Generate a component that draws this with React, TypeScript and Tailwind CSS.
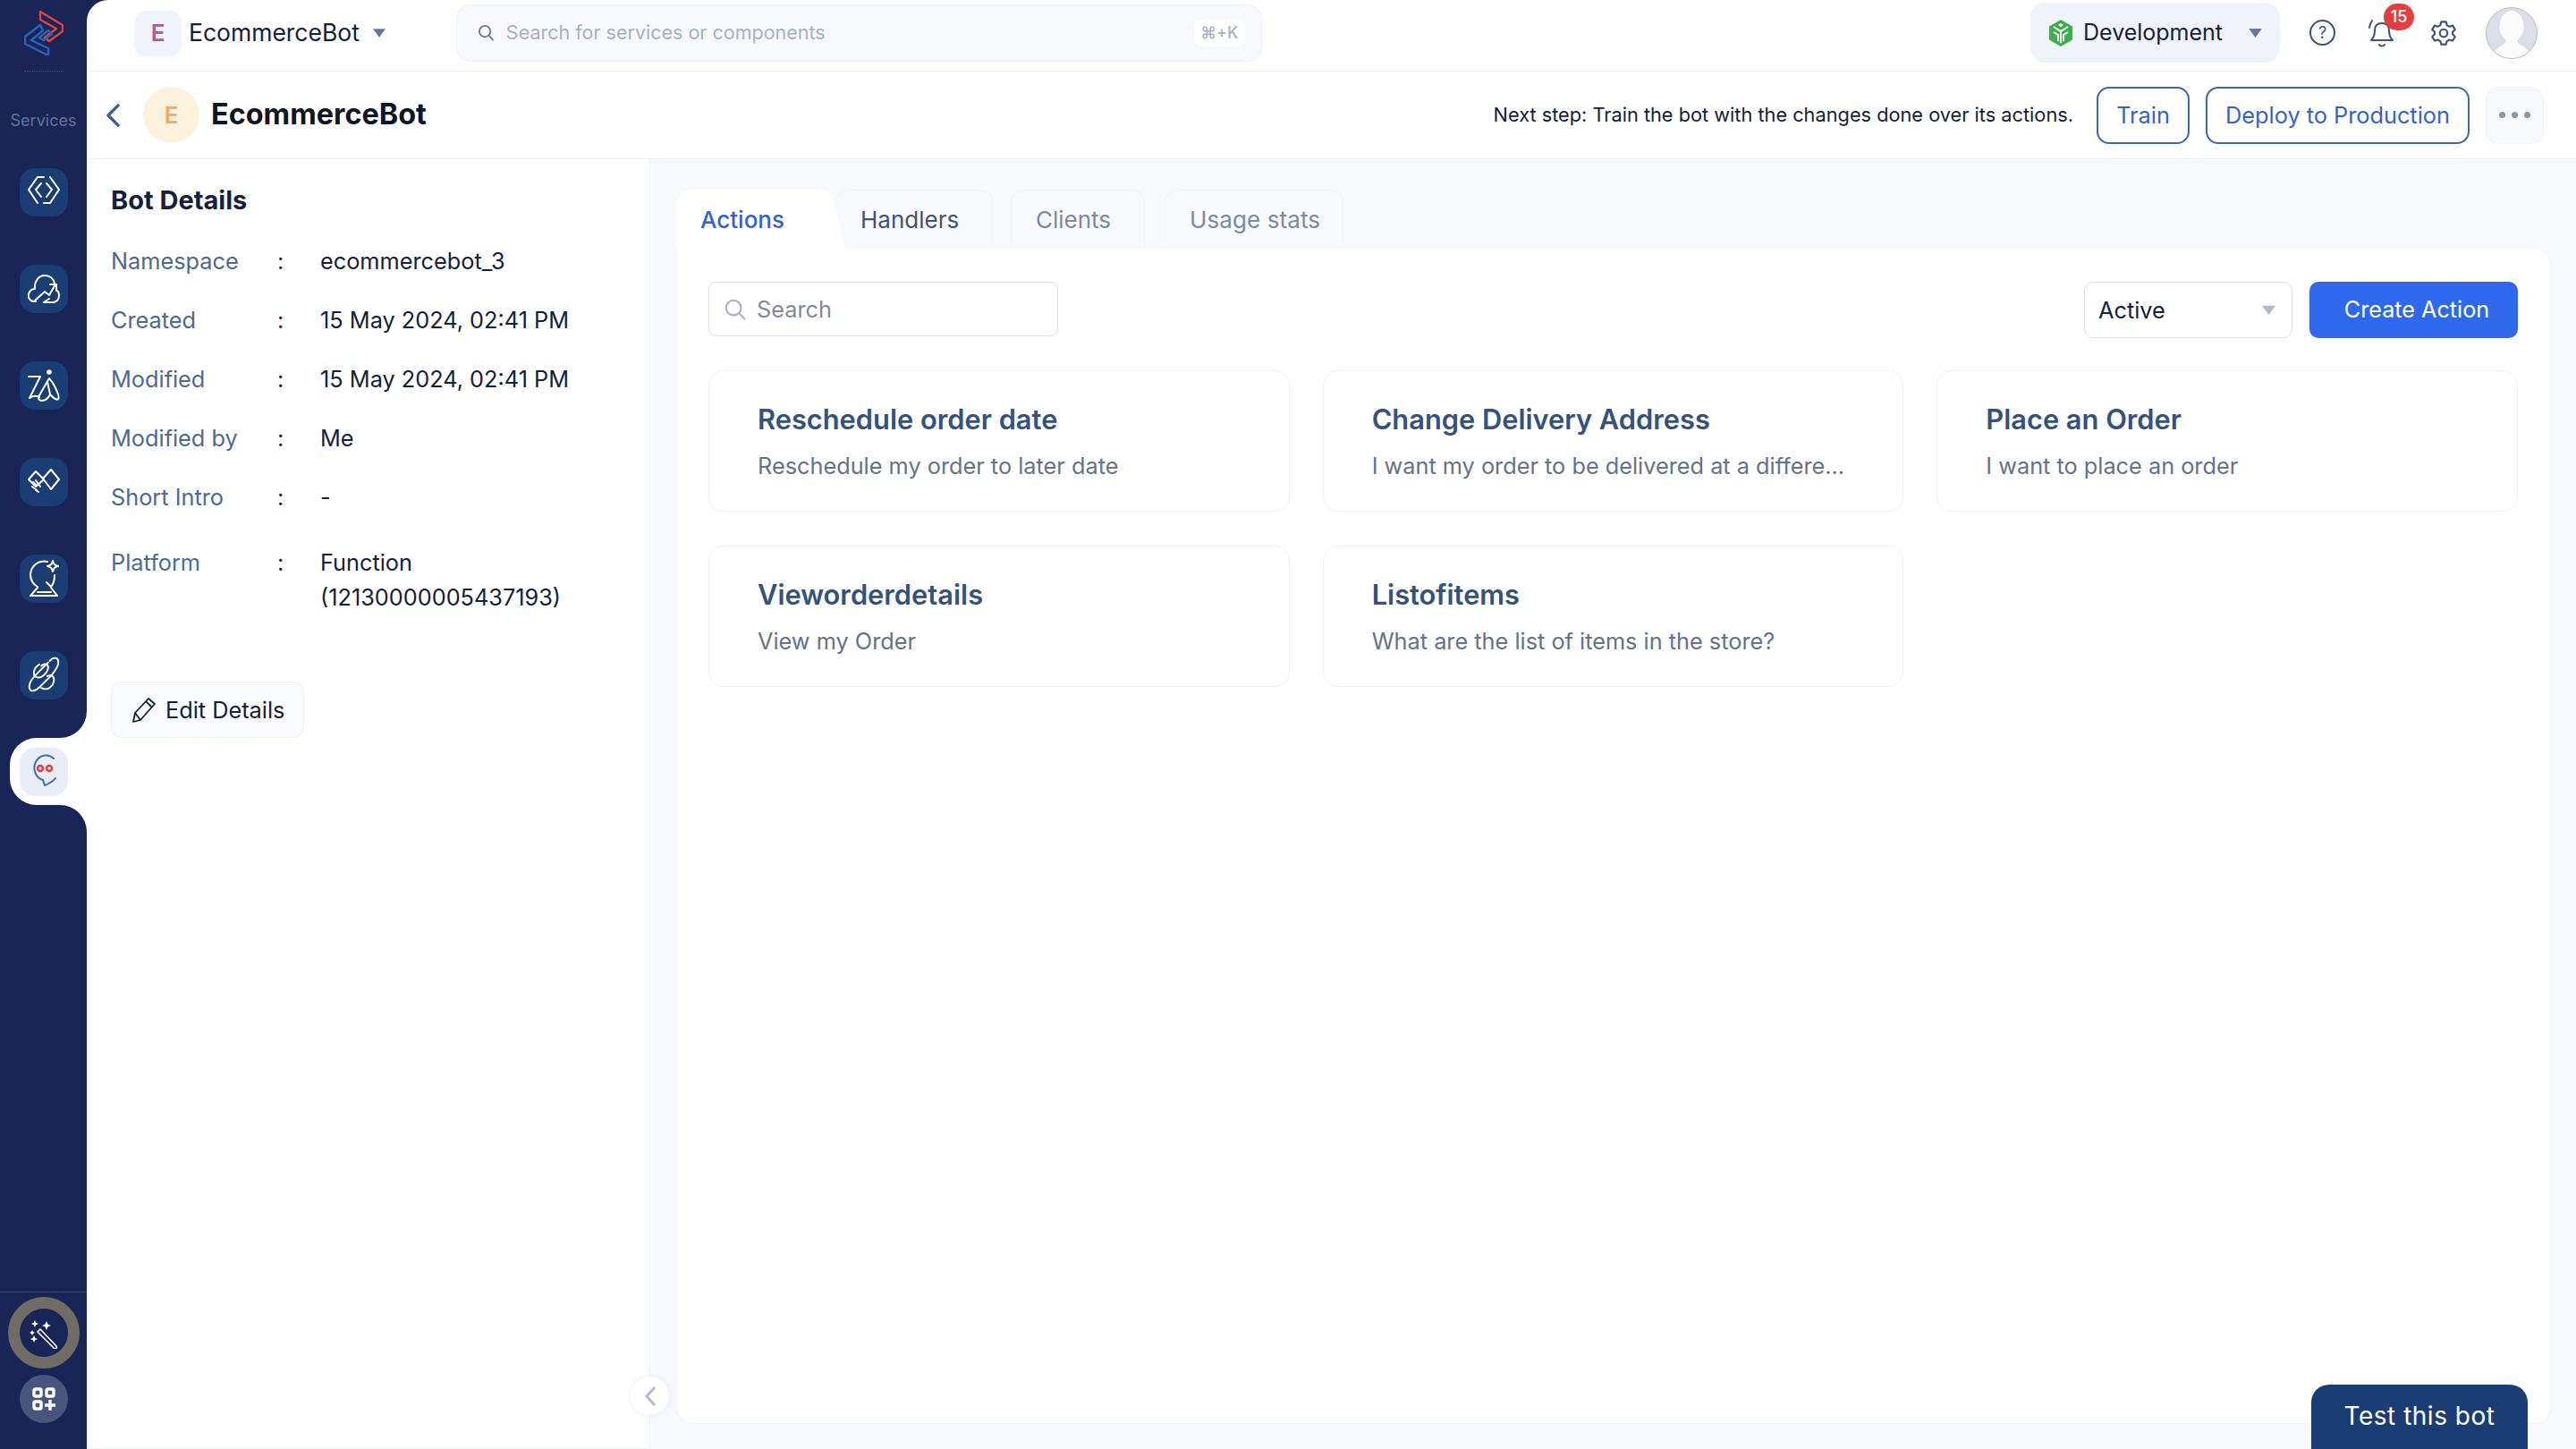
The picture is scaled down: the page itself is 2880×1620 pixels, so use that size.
import React from "react";

const Tile = ({ children }: { children: React.ReactNode }) => (
  <div className="flex h-[54px] w-[54px] items-center justify-center rounded-[17px] bg-[#1a3e73]">{children}</div>
);

const S = { fill: "none", stroke: "white", strokeWidth: 2, strokeLinecap: "round" as const, strokeLinejoin: "round" as const };

const Caret = ({ className }: { className: string }) => (
  <svg viewBox="0 0 16 11" className={className}><path d="M0 0H16L8 11Z" fill="currentColor" /></svg>
);

const Row = ({ k, v, h = "h-[66px]" }: { k: string; v: React.ReactNode; h?: string }) => (
  <div className={`flex ${h} text-[25.300px] leading-[39px]`}>
    <div className="w-[186px] text-[#4b6a93]">{k}</div>
    <div className="w-[48px] text-[#14213d]">:</div>
    <div className="w-[290px] text-[#14213d]">{v}</div>
  </div>
);

const Card = ({ t, d }: { t: string; d: string }) => (
  <div className="h-[158px] rounded-[16px] border border-[#f0f2f7] bg-white pl-[54px] pt-[32px]">
    <div className="text-[30.800px] font-semibold leading-[44px] text-[#34527e]">{t}</div>
    <div className="mt-[11px] text-[25.300px] leading-[38px] text-[#64728c]">{d}</div>
  </div>
);

export default function App() {
  return (
    <div className="relative flex h-[1620px] w-[2880px] overflow-hidden bg-[#1a2557] font-[Inter,sans-serif] text-[#14213d]">
      <aside className="flex w-[97px] shrink-0 flex-col items-start">
        <div className="flex h-[80px] w-full shrink-0 justify-center pt-[12px]">
          <div className="h-[68px] w-[44px] border-b border-dotted border-[#46557f]">
            <svg viewBox="0 0 44 50" className="h-[50px] w-[44px]">
              <path d="M18 1 43 16V23L28 34 23 30 36 20 18 10Z" fill="none" stroke="#e2433f" strokeWidth="2.400" strokeLinejoin="round" />
              <path d="M18 16 1 29V37L27 50V42L8 33 21 22ZM27 22 17 30 22 33 31 26Z" fill="none" stroke="#2c62b5" strokeWidth="2.400" strokeLinejoin="round" />
            </svg>
          </div>
        </div>
        <div className="mt-[43px] w-full text-center text-[18px] leading-[24px] text-[#5f7397]">Services</div>
        <div className="ml-[22px] mt-[41px] flex flex-col gap-[54px]">
          <Tile>
            <svg viewBox="0 0 36 36" className="h-[36px] w-[36px]" {...S}>
              <path d="M18 1H11L1 15 11 30" /><path d="M15 8 9 15 15 23" /><path d="M18 30H25L35 15 25 1" /><path d="M21 23 27 15 21 8" />
            </svg>
          </Tile>
          <Tile>
            <svg viewBox="0 0 36 36" className="h-[36px] w-[36px]" {...S}>
              <path d="M9 32H6C2 31 0 27 1 24 2 20 5 18 8 18 7 10 12 3 19 3 25 3 29 7 30 12" /><path d="M8 31 19 21 24 25 31 13M25 13H32V20" /><path d="M18 33H29C33 32 35 29 35 25 35 23 34 21 33 20" /><path d="M18 33 24 29" />
            </svg>
          </Tile>
          <Tile>
            <svg viewBox="0 0 36 36" className="h-[36px] w-[36px]" {...S}>
              <path d="M1 8H14L2 32C6 29 9 29 13 31" /><circle cx="24" cy="3" r="1.800" fill="white" /><path d="M24 10 13 29C11 33 13 35 16 35 20 35 23 32 25 28 29 32 32 35 34 33 36 31 33 24 28 15Z" /><path d="M22 14 25 28" />
            </svg>
          </Tile>
          <Tile>
            <svg viewBox="0 0 36 36" className="h-[36px] w-[36px]" {...S}>
              <path d="M9 6 1 15 9 23 18 15Z" /><path d="M26 4 17 14 26 26 35 15Z" /><path d="M6 18 10 22M9 16 14 23M5 23 10 27M9 27 12 29" />
            </svg>
          </Tile>
          <Tile>
            <svg viewBox="0 0 36 42" className="h-[42px] w-[36px]" {...S}>
              <path d="M22 2C12 0 4 6 3 16 3 22 6 27 11 30" /><path d="M30 17C30 23 29 27 26 30L21 25" /><path d="M28 1C29 5 30 6 34 7 30 8 29 9 28 13 27 9 26 8 22 7 26 6 27 5 28 1Z" /><path d="M11 31 3 40H33L26 31" /><path d="M11 36H26" />
            </svg>
          </Tile>
          <Tile>
            <svg viewBox="0 0 38 46" className="h-[44px] w-[36px]" {...S}>
              <path d="M26 6C30 1 37 1 36 9 36 13 32 18 28 23L14 37C10 41 3 44 2 38 1 33 6 26 10 22L24 8" /><path d="M14 10C7 14 5 22 10 25 16 28 23 20 24 15 25 10 20 8 16 12" /><path d="M16 38C24 42 31 35 31 28 31 24 27 22 23 24" />
            </svg>
          </Tile>
        </div>
        <div className="relative ml-[11px] mt-[43px] h-[75px] w-[86px] rounded-l-[30px] bg-white py-[11px] pl-[11px]">
          <div className="absolute -top-[30px] right-0 h-[30px] w-[30px] bg-white"><div className="h-full w-full rounded-br-[30px] bg-[#1a2557]" /></div>
          <div className="absolute -bottom-[30px] right-0 h-[30px] w-[30px] bg-white"><div className="h-full w-full rounded-tr-[30px] bg-[#1a2557]" /></div>
          <div className="flex h-[54px] w-[54px] items-center justify-center rounded-[17px] bg-[#e8edf6]">
            <svg viewBox="-1 -1 30 37" className="h-[37px] w-[30px] -translate-y-[2px]">
              <path d="M25 4A13 14 0 1 0 13 28L15 34C20 32 24 30 27 26" fill="none" stroke="#3f6db5" strokeWidth="2" strokeLinecap="round" strokeLinejoin="round" />
              <circle cx="10" cy="15" r="3" fill="none" stroke="#e2433f" strokeWidth="2.600" /><circle cx="20" cy="15" r="3" fill="none" stroke="#e2433f" strokeWidth="2.600" />
            </svg>
          </div>
        </div>
        <div className="mt-auto flex w-full flex-col items-center">
          <div className="h-px w-full bg-[#3c4a78]" />
          <div className="ml-[1px] mt-[5px] flex h-[80px] w-[80px] items-center justify-center rounded-full border-[13px] border-[#6f6c63]">
            <svg viewBox="0 0 32 36" className="h-[36px] w-[32px]">
              <path d="M9 17 12 14 30 33C31 35 29 37 27 35Z" fill="none" stroke="white" strokeWidth="1.600" strokeLinejoin="round" />
              <path d="M6 4 7.200 6.800 10 8 7.200 9.200 6 12 4.800 9.200 2 8 4.800 6.800ZM19 5 20.500 8.500 24 10 20.500 11.500 19 15 17.500 11.500 14 10 17.500 8.500ZM3 15 4 17 6 18 4 19 3 21 2 19 0 18 2 17ZM5 21 6.200 23.800 9 25 6.200 26.200 5 29 3.800 26.200 1 25 3.800 23.800Z" fill="white" />
            </svg>
          </div>
          <div className="ml-[1px] mb-[29px] mt-[7px] flex h-[54px] w-[54px] items-center justify-center rounded-full bg-[#47557f]">
            <svg viewBox="0 0 26 26" className="h-[26px] w-[26px]" fill="none" stroke="white" strokeWidth="3.400">
              <rect x="2" y="2" width="8" height="8" rx="1.500" /><rect x="16" y="2" width="8" height="8" rx="1.500" /><rect x="2" y="16" width="8" height="8" rx="1.500" /><path d="M20 14V26M14 20H26" />
            </svg>
          </div>
        </div>
      </aside>

      <main className="flex min-w-0 flex-1 flex-col overflow-hidden rounded-tl-[24px] bg-white">
        <header className="flex h-[80px] shrink-0 items-center border-b border-[#eef0f5] pb-[6px]">
          <div className="ml-[54px] flex h-[50px] w-[51px] items-center justify-center rounded-[12px] bg-[#f1f3fa] text-[26px] font-semibold text-[#c0528f] shadow-[0_2px_6px_#f3f4f9]">E</div>
          <div className="ml-[9px] text-[26.500px] text-[#14213d]">EcommerceBot</div>
          <Caret className="ml-[15px] h-[10px] w-[14px] text-[#66779a]" />
          <div className="ml-[79px] flex h-[64px] w-[901px] items-center rounded-[16px] border border-[#eff1f7] bg-[#f8f9fd] pl-[23px] pr-[18px]">
            <svg viewBox="0 0 20 20" className="h-[19px] w-[19px]" fill="none" stroke="#6f7d98" strokeWidth="2"><circle cx="8.500" cy="8.500" r="6.500" /><path d="M13.500 13.500 18.500 19" /></svg>
            <div className="ml-[13px] text-[21.500px] text-[#a8b1c4]">Search for services or components</div>
            <div className="ml-auto flex h-[30px] w-[57px] items-center justify-center rounded-[8px] bg-white text-[18px] font-medium text-[#a8b1c4]">⌘+K</div>
          </div>
          <div className="ml-auto flex h-[67px] w-[279px] items-center rounded-[16px] bg-[#f1f3fa] pl-[20px]">
            <svg viewBox="0 0 28 30" className="h-[30px] w-[28px]">
              <path d="M14 0 27 7.500V22.500L14 30 1 22.500V7.500Z" fill="#3fae4d" />
              <path d="M6 8 14 13 22 8M14 13V26M6 14 11 17V24M22 14 17 17V24" fill="none" stroke="white" strokeWidth="2" /><path d="M14 4 17 6 14 8 11 6Z" fill="white" />
            </svg>
            <div className="ml-[11px] text-[25px] text-[#14213d]">Development</div>
            <Caret className="ml-auto mr-[20px] h-[10px] w-[15px] text-[#66779a]" />
          </div>
          <div className="ml-[33px] flex h-[29px] w-[29px] items-center justify-center rounded-full border-2 border-[#3d5478] text-[18px] leading-none text-[#3d5478]">?</div>
          <div className="relative ml-[37px] h-[34px] w-[30px]">
            <svg viewBox="0 0 30 34" className="h-[34px] w-[30px]" fill="none" stroke="#3d5478" strokeWidth="2" strokeLinecap="round" strokeLinejoin="round">
              <path d="M3 25C6 22 7 19 7 14 7 9 10 6 15 6 20 6 23 9 23 14 23 19 24 22 27 25Z" /><path d="M12 30C13 32 17 32 18 30" /><path d="M4 3C2 6 1 8 1 11" />
            </svg>
            <div className="absolute -top-[16px] left-[17px] flex h-[30px] w-[34px] items-center justify-center rounded-full bg-[#e2403f] text-[18px] font-medium text-white">15</div>
          </div>
          <svg viewBox="0 0 24 24" className="ml-[38px] h-[32px] w-[32px]" fill="none" stroke="#3d5478" strokeWidth="1.600" strokeLinejoin="round">
            <path d="M10 2.500H14L14.700 5.300 16.800 6.500 19.600 5.700 21.600 9.100 19.500 11V13L21.600 15 19.600 18.400 16.800 17.600 14.700 18.800 14 21.500H10L9.300 18.800 7.200 17.600 4.400 18.400 2.400 15 4.500 13V11L2.400 9.100 4.400 5.700 7.200 6.500 9.300 5.300Z" /><circle cx="12" cy="12" r="3.200" />
          </svg>
          <div className="ml-[31px] mr-[43px] h-[58px] w-[58px] overflow-hidden rounded-full border border-[#b9bdc9] bg-[#dcdee6]">
            <svg viewBox="0 0 58 58" className="h-full w-full"><ellipse cx="29" cy="21" rx="14" ry="18" fill="#fbfbfc" /><path d="M22 34V40C18 44 13 46 9 50 14 56 21 58 29 58 37 58 44 56 49 50 45 46 40 44 36 40V34Z" fill="#fbfbfc" /></svg>
          </div>
        </header>

        <div className="flex h-[98px] shrink-0 items-center border-b border-[#eff1f6]">
          <svg viewBox="0 0 18 28" className="ml-[21px] h-[26px] w-[17px]" fill="none" stroke="#3d5f94" strokeWidth="3.600" strokeLinecap="round" strokeLinejoin="round"><path d="M15 2 3 14 15 26" /></svg>
          <div className="ml-[25px] flex h-[63px] w-[63px] items-center justify-center rounded-full bg-[#fdf2dc] text-[26px] font-semibold text-[#f4a862]">E</div>
          <div className="ml-[13px] text-[32.400px] font-bold text-[#0d1526]">EcommerceBot</div>
          <div className="ml-auto text-[21.750px] text-[#14213d]">Next step: Train the bot with the changes done over its actions.</div>
          <button className="ml-[26px] h-[64px] w-[104px] rounded-[14px] border-2 border-[#3c68b8] text-[25.300px] text-[#2f62d8]">Train</button>
          <button className="ml-[18px] h-[64px] w-[295px] rounded-[14px] border-2 border-[#3c68b8] text-[25.300px] text-[#2f62d8]">Deploy to Production</button>
          <div className="ml-[18px] mr-[36px] flex h-[64px] w-[65px] items-center justify-center gap-[7px] rounded-[14px] border border-[#f1f3f8] bg-[#f8f9fd]">
            <div className="h-[7px] w-[7px] rounded-full bg-[#8c96ab]" /><div className="h-[7px] w-[7px] rounded-full bg-[#8c96ab]" /><div className="h-[7px] w-[7px] rounded-full bg-[#8c96ab]" />
          </div>
        </div>

        <div className="flex min-h-0 flex-1">
          <section className="relative w-[630px] shrink-0 border-r border-b border-[#eff1f6] pl-[27px] pt-[24px]">
            <h2 className="mb-[26px] text-[29px] font-bold leading-[44px] text-[#14213d]">Bot Details</h2>
            <Row k="Namespace" v="ecommercebot_3" />
            <Row k="Created" v="15 May 2024, 02:41 PM" />
            <Row k="Modified" v="15 May 2024, 02:41 PM" />
            <Row k="Modified by" v="Me" />
            <Row k="Short Intro" v="-" h="h-[73px]" />
            <Row k="Platform" v={<>Function<br />(12130000005437193)</>} h="h-[153px]" />
            <div className="flex h-[63px] w-[216px] items-center rounded-[12px] border border-[#f0f2f8] bg-[#fafbfe] pl-[23px] text-[25.300px] text-[#14213d]">
              <svg viewBox="0 0 26 28" className="h-[28px] w-[26px]" fill="none" stroke="#14213d" strokeWidth="1.800" strokeLinejoin="round"><path d="M1 27 3 17 18 1 25 7 9 25Z" /><path d="M15 4 22 11" /><path d="M3 17 9 25" /></svg>
              <span className="ml-[11px]">Edit Details</span>
            </div>
            <div className="absolute -right-[22px] bottom-[37px] flex h-[43px] w-[43px] items-center justify-center rounded-full bg-white shadow-[0_0_6px_#e8eaf2]">
              <svg viewBox="0 0 14 24" className="h-[24px] w-[14px]" fill="none" stroke="#b4bbd2" strokeWidth="3"><path d="M12 2 3 12 12 22" /></svg>
            </div>
          </section>

          <section className="flex min-w-0 flex-1 flex-col bg-[#f7f9fd] pb-[28px] pl-[29px] pr-[28px] pt-[34px]">
            <div className="flex h-[66px] shrink-0 text-[26px]">
              <div className="relative flex w-[160px] items-center rounded-tl-[18px] bg-white pl-[27px] font-medium text-[#2f62d8]">
                Actions
                <svg viewBox="0 0 30 66" preserveAspectRatio="none" className="absolute left-[159px] top-0 h-[66px] w-[30px]"><path d="M0 0C10 0 15 6 18 16L30 66H0Z" fill="white" /></svg>
              </div>
              <div className="ml-[18px] flex w-[176px] items-center rounded-t-[14px] border border-b-0 border-[#f2f4f8] pl-[27px] text-[#3d5478]">Handlers</div>
              <div className="ml-[20px] flex w-[150px] items-center rounded-t-[14px] border border-b-0 border-[#f2f4f8] pl-[27px] text-[#7a8aa8]">Clients</div>
              <div className="ml-[22px] flex w-[200px] items-center rounded-t-[14px] border border-b-0 border-[#f2f4f8] pl-[27px] tracking-[0.1px] text-[#7a8aa8]">Usage stats</div>
            </div>
            <div className="min-h-0 flex-1 rounded-b-[18px] rounded-tr-[18px] border border-t-0 border-[#f0f2f7] bg-white pl-[35px] pr-[36px] pt-[37px]">
              <div className="flex items-start">
                <div className="flex h-[61px] w-[391px] items-center rounded-[8px] border border-[#dcdfe6] pl-[17px] text-[25.300px] text-[#7f8a9f]">
                  <svg viewBox="0 0 26 26" className="h-[24px] w-[24px]" fill="none" stroke="#a8afc2" strokeWidth="2.200"><circle cx="11" cy="11" r="9" /><path d="M17.500 17.500 25 25" /></svg>
                  <span className="ml-[12px]">Search</span>
                </div>
                <div className="ml-auto flex h-[63px] w-[233px] items-center rounded-[10px] border border-[#dcdfe6] pl-[15px] text-[25.300px] text-[#14213d]">
                  Active
                  <Caret className="ml-auto mr-[18px] h-[12px] w-[15px] text-[#b4bbca]" />
                </div>
                <button className="ml-[19px] h-[63px] w-[233px] rounded-[10px] bg-[#2e68ec] pl-[7px] text-[25.200px] text-white">Create Action</button>
              </div>
              <div className="mt-[36px] grid grid-cols-3 gap-x-[37px] gap-y-[38px]">
                <Card t="Reschedule order date" d="Reschedule my order to later date" />
                <Card t="Change Delivery Address" d="I want my order to be delivered at a differe..." />
                <Card t="Place an Order" d="I want to place an order" />
                <Card t="Vieworderdetails" d="View my Order" />
                <Card t="Listofitems" d="What are the list of items in the store?" />
              </div>
            </div>
          </section>
        </div>
      </main>
      <div className="absolute bottom-0 right-[54px] flex h-[72px] w-[242px] items-center justify-center rounded-t-[20px] bg-[#1a3e73] pb-[2px] text-[28px] tracking-[0.5px] text-white">Test this bot</div>
    </div>
  );
}
